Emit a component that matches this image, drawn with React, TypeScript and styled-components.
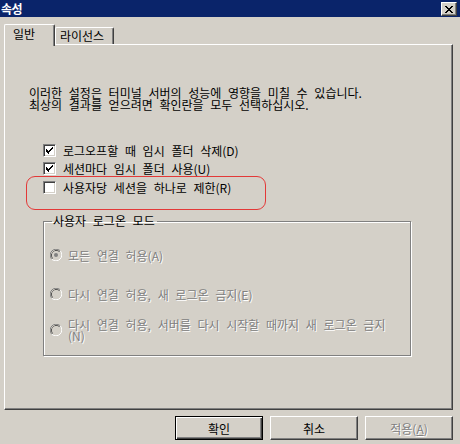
import React from "react";
import styled, { createGlobalStyle } from "styled-components";

const Global = createGlobalStyle`
  html, body { margin: 0; padding: 0; background: #d4d0c8; }
  body { font-family: "Noto Sans CJK KR", "Noto Sans", sans-serif; font-size: 12px; color: #000; }
`;

const Window = styled.div`
  width: 460px;
  height: 444px;
  background: #d4d0c8;
  display: flex;
  flex-direction: column;
  overflow: hidden;
`;

const TitleBar = styled.div`
  height: 17px;
  background: #0a246a;
  display: flex;
  align-items: center;
  justify-content: space-between;
  padding: 0 3px 0 1px;
`;

const TitleText = styled.span`
  color: #fff;
  font-weight: bold;
  font-size: 12px;
  line-height: 17px;
  letter-spacing: -0.5px;
`;

const CloseButton = styled.div`
  width: 14px;
  height: 12px;
  margin-top: 1px;
  background: #d4d0c8;
  border: 1px solid;
  border-color: #fff #404040 #404040 #fff;
  box-shadow: inset -1px -1px #808080;
  display: flex;
  align-items: center;
  justify-content: center;
`;

const Content = styled.div`
  display: flex;
  flex-direction: column;
  padding: 7px 7px 0 4px;
`;

const TabStrip = styled.div`
  display: flex;
  align-items: flex-end;
  height: 20px;
`;

const Tab = styled.div<{ $active?: boolean }>`
  position: relative;
  z-index: ${(p) => (p.$active ? 2 : 1)};
  box-sizing: border-box;
  height: ${(p) => (p.$active ? 22 : 17)}px;
  margin-bottom: ${(p) => (p.$active ? -2 : 0)}px;
  padding: ${(p) => (p.$active ? "2px 0 0 8px" : "1px 0 0 4px")};
  width: ${(p) => (p.$active ? 51 : 59)}px;
  background: #d4d0c8;
  border-top: 1px solid #fff;
  border-left: 1px solid #fff;
  border-right: 1px solid #404040;
  box-shadow: inset -1px 0 #808080;
  border-radius: 2px 2px 0 0;
  font-size: 12px;
  line-height: 14px;
`;

const Panel = styled.div`
  position: relative;
  box-sizing: border-box;
  width: 449px;
  height: 366px;
  border: 1px solid;
  border-color: #fff #404040 #404040 #fff;
  box-shadow: inset -1px -1px #808080;
  padding: 42px 0 0 24px;
  display: flex;
  flex-direction: column;
`;

const Description = styled.p`
  margin: 0;
  font-size: 12px;
  line-height: 12px;
  word-spacing: 4px;
`;

const CheckList = styled.div`
  display: flex;
  flex-direction: column;
  margin: 33px 0 0 14px;
`;

const CheckRow = styled.div<{ $gapTop?: number }>`
  display: flex;
  align-items: center;
  height: 13px;
  margin-top: ${(p) => p.$gapTop ?? 0}px;
  gap: 7px;
  font-size: 12px;
  line-height: 13px;
  word-spacing: 4px;
`;

const Box = styled.div`
  box-sizing: border-box;
  width: 13px;
  height: 13px;
  flex: none;
  background: #fff;
  border: 1px solid;
  border-color: #808080 #fff #fff #808080;
  box-shadow: inset 1px 1px #404040, inset -1px -1px #d4d0c8;
  display: flex;
  align-items: center;
  justify-content: center;
`;

const Highlight = styled.div`
  position: absolute;
  left: 21px;
  top: 131px;
  width: 240px;
  height: 34px;
  box-sizing: border-box;
  border: 1.5px solid rgba(228, 40, 40, 0.9);
  border-radius: 9px;
  pointer-events: none;
`;

const GroupBox = styled.fieldset`
  box-sizing: border-box;
  width: 368px;
  height: 141px;
  margin: 21px 0 0 14px;
  padding: 0 0 0 6px;
  border: 1px solid #808080;
  box-shadow: 1px 1px 0 #fff, inset 1px 1px 0 #fff;
  border-radius: 0;
  display: flex;
  flex-direction: column;
  position: relative;
`;

const Legend = styled.legend`
  padding: 0 2px 0 1px;
  margin-left: 2px;
  font-size: 12px;
  line-height: 12px;
  color: #000;
  word-spacing: 4px;
`;

const RadioRow = styled.div<{ $top: number }>`
  display: flex;
  align-items: center;
  gap: 6px;
  margin-top: ${(p) => p.$top}px;
`;

const DisabledText = styled.span`
  color: #808080;
  text-shadow: 1px 1px 0 #fff;
  font-size: 12px;
  line-height: 11px;
  word-spacing: 4px;
`;

const ButtonRow = styled.div`
  display: flex;
  justify-content: flex-end;
  gap: 7px;
  margin-top: 6px;
  padding-right: 0;
`;

const Button = styled.div<{ $default?: boolean; $disabled?: boolean }>`
  box-sizing: border-box;
  width: 88px;
  height: 24px;
  display: flex;
  align-items: center;
  justify-content: center;
  font-size: 12px;
  background: #d4d0c8;
  color: ${(p) => (p.$disabled ? "#808080" : "#000")};
  text-shadow: ${(p) => (p.$disabled ? "1px 1px 0 #fff" : "none")};
  border: 1px solid;
  border-color: ${(p) =>
    p.$default ? "#000" : "#fff #404040 #404040 #fff"};
  box-shadow: ${(p) =>
    p.$default
      ? "inset 1px 1px #fff, inset -1px -1px #404040, inset -2px -2px #808080"
      : "inset -1px -1px #808080"};
`;

const Accel = styled.span`
  text-decoration: underline;
`;

const CheckMark = () => (
  <svg width="9" height="9" viewBox="0 0 9 9" shapeRendering="crispEdges">
    <path
      d="M1 3h1v1h-1zM1 4h2v1h-2zM1 5h3v1h-3zM2 6h2v1h-2zM3 7h1v1h-1z M4 4h1v2h-1z M5 3h1v2h-1z M6 2h1v2h-1z M7 1h1v2h-1z"
      fill="#000"
    />
    <path d="M3 5h1v3h-1z" fill="#000" />
  </svg>
);

const Radio = ({ checked }: { checked?: boolean }) => (
  <svg width="12" height="12" viewBox="0 0 12 12" style={{ flex: "none" }}>
    <path d="M10.24 1.76 A6 6 0 0 0 1.76 10.24" fill="none" stroke="#808080" strokeWidth="1" />
    <path d="M1.76 10.24 A6 6 0 0 0 10.24 1.76" fill="none" stroke="#fff" strokeWidth="1" />
    <circle cx="6" cy="6" r="5" fill="#d4d0c8" />
    <path d="M9.5 2.5 A5 5 0 0 0 2.5 9.5" fill="none" stroke="#404040" strokeWidth="1" />
    <circle cx="6" cy="6" r="4" fill="#d4d0c8" />
    {checked && <circle cx="6" cy="6" r="2" fill="#808080" />}
  </svg>
);

export default function App() {
  return (
    <>
      <Global />
      <Window>
        <TitleBar>
          <TitleText>속성</TitleText>
          <CloseButton>
            <svg width="8" height="7" viewBox="0 0 8 7" shapeRendering="crispEdges">
              <path
                d="M0 0h2v1h-2zM6 0h2v1h-2zM1 1h2v1h-2zM5 1h2v1h-2zM2 2h4v1h-4zM3 3h2v1h-2zM2 4h4v1h-4zM1 5h2v1h-2zM5 5h2v1h-2zM0 6h2v1h-2zM6 6h2v1h-2z"
                fill="#000"
              />
            </svg>
          </CloseButton>
        </TitleBar>
        <Content>
          <TabStrip>
            <Tab $active>일반</Tab>
            <Tab>라이선스</Tab>
          </TabStrip>
          <Panel>
            <Description>
              이러한 설정은 터미널 서버의 성능에 영향을 미칠 수 있습니다.
              <br />
              최상의 결과를 얻으려면 확인란을 모두 선택하십시오.
            </Description>
            <CheckList>
              <CheckRow>
                <Box>
                  <CheckMark />
                </Box>
                로그오프할 때 임시 폴더 삭제(D)
              </CheckRow>
              <CheckRow $gapTop={5}>
                <Box>
                  <CheckMark />
                </Box>
                세션마다 임시 폴더 사용(U)
              </CheckRow>
              <CheckRow $gapTop={6}>
                <Box />
                사용자당 세션을 하나로 제한(R)
              </CheckRow>
            </CheckList>
            <Highlight />
            <GroupBox>
              <Legend>사용자 로그온 모드</Legend>
              <RadioRow $top={22}>
                <Radio checked />
                <DisabledText>모든 연결 허용(A)</DisabledText>
              </RadioRow>
              <RadioRow $top={27}>
                <Radio />
                <DisabledText>다시 연결 허용, 새 로그온 금지(E)</DisabledText>
              </RadioRow>
              <RadioRow $top={19}>
                <Radio />
                <DisabledText>
                  다시 연결 허용, 서버를 다시 시작할 때까지 새 로그온 금지
                  <br />
                  (N)
                </DisabledText>
              </RadioRow>
            </GroupBox>
          </Panel>
          <ButtonRow>
            <Button $default>확인</Button>
            <Button>취소</Button>
            <Button $disabled>
              적용(<Accel>A</Accel>)
            </Button>
          </ButtonRow>
        </Content>
      </Window>
    </>
  );
}
